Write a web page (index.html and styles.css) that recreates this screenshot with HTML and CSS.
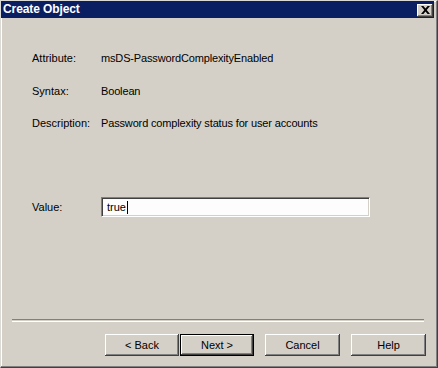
FILE: index.html
```html
<!DOCTYPE html>
<html>
<head>
<meta charset="utf-8">
<title>Create Object</title>
<link rel="stylesheet" href="styles.css">
</head>
<body>
<div class="window">
  <div class="titlebar">
    <span class="title">Create Object</span>
    <button class="close" aria-label="Close">
      <svg width="9" height="8" viewBox="0 0 9 8"><path d="M0 0h2.4L4.5 2.6 6.6 0H9L5.7 4 9 8H6.6L4.5 5.4 2.4 8H0l3.3-4z" fill="#000"/></svg>
    </button>
  </div>
  <div class="content">
    <div class="row r1"><span class="label">Attribute:</span><span class="val">msDS-PasswordComplexityEnabled</span></div>
    <div class="row r2"><span class="label">Syntax:</span><span class="val">Boolean</span></div>
    <div class="row r3"><span class="label">Description:</span><span class="val">Password complexity status for user accounts</span></div>
    <div class="row valrow"><span class="label">Value:</span><div class="input"><span>true</span><span class="caret"></span></div></div>
  </div>
  <div class="sep"></div>
  <div class="buttons">
    <button class="btn">&lt; Back</button>
    <button class="btn default">Next &gt;</button>
    <button class="btn gap">Cancel</button>
    <button class="btn gap2">Help</button>
  </div>
</div>
</body>
</html>
```
FILE: styles.css
```css
html, body {
  margin: 0;
  padding: 0;
  background: #d4d0c8;
}
body {
  font-family: "Liberation Sans", Arial, sans-serif;
  font-size: 11px;
  color: #000;
}
.window {
  width: 438px;
  height: 368px;
  box-sizing: border-box;
  background: #d4d0c8;
  border-top: 1px solid #dcdad4;
  border-left: 1px solid #dcdad4;
  border-right: 1px solid #404040;
  border-bottom: 1px solid #404040;
  box-shadow: inset -1px -1px #808080, inset 1px 1px #ffffff;
  padding: 0 3px 0 0;
  display: flex;
  flex-direction: column;
}
.titlebar {
  height: 17px;
  background: #0a1f62;
  display: flex;
  align-items: center;
  justify-content: space-between;
  padding: 0 1px 0 2px;
}
.title {
  color: #fff;
  font-weight: bold;
  font-size: 12px;
  letter-spacing: -0.1px;
  line-height: 17px;
}
.close {
  width: 16px;
  height: 13px;
  margin-top: 1px;
  padding: 0 0 1px 0;
  background: #d4d0c8;
  border: none;
  box-shadow: inset -1px -1px #404040, inset 1px 1px #fff, inset -2px -2px #808080;
  display: flex;
  align-items: center;
  justify-content: center;
}
.content {
  padding: 34px 0 0 31px;
  display: flex;
  flex-direction: column;
}
.row {
  display: flex;
  align-items: center;
  line-height: 13px;
  height: 13px;
}
.val {
  letter-spacing: -0.15px;
}
.r2 { margin-top: 20px; }
.r3 { margin-top: 19px; }
.label {
  width: 69px;
  flex: none;
}
.valrow {
  margin-top: 67px;
  height: 20px;
}
.input {
  width: 269px;
  height: 20px;
  box-sizing: border-box;
  background: #fdfdfd;
  border-top: 1px solid #808080;
  border-left: 1px solid #808080;
  border-right: 1px solid #ffffff;
  border-bottom: 1px solid #ffffff;
  box-shadow: inset 1px 1px #404040, inset -1px -1px #d4d0c8;
  display: flex;
  align-items: center;
  padding-left: 5px;
}
.caret {
  display: inline-block;
  width: 1px;
  height: 13px;
  background: #000;
  margin-left: 1px;
}
.sep {
  margin: 102px 10px 0 11px;
  height: 1px;
  border-top: 1px solid #808080;
  border-bottom: 1px solid #ffffff;
}
.buttons {
  margin-top: 12px;
  display: flex;
  padding-left: 104px;
}
.btn {
  width: 74px;
  height: 22px;
  padding: 0;
  font-family: "Liberation Sans", Arial, sans-serif;
  font-size: 11px;
  color: #000;
  background: #d4d0c8;
  border: none;
  box-shadow: inset -1px -1px #404040, inset 1px 1px #fff, inset -2px -2px #808080;
}
.btn.default {
  margin-left: 1px;
  box-shadow: inset 1px 1px #000, inset -1px -1px #000, inset -2px -2px #404040, inset 2px 2px #fff, inset -3px -3px #808080;
}
.btn.gap { margin-left: 11px; width: 75px; }
.btn.gap2 { margin-left: 11px; width: 75px; }
```
